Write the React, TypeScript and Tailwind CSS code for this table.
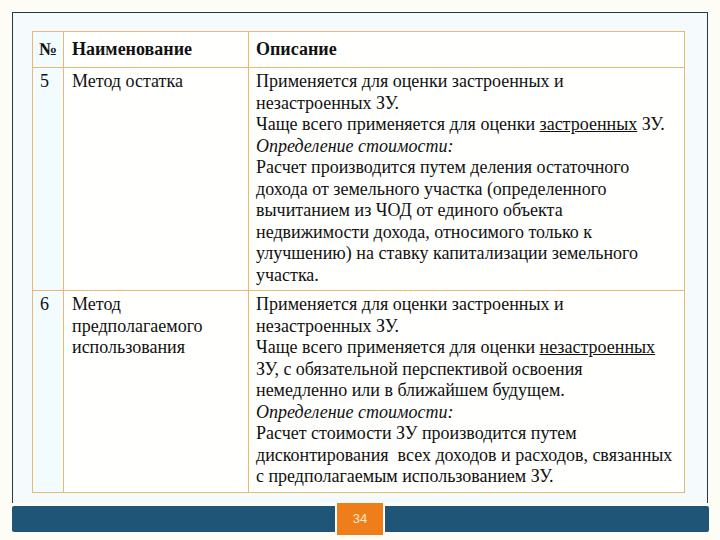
import React from 'react';

const cell = 'border border-[#e9b872] align-top pt-[3px]';

function Row({ num, name, children, height }: { num: string; name: React.ReactNode; children: React.ReactNode; height: string }) {
  return (
    <tr className={height}>
      <td className={`${cell} bg-[#f2fbfd] px-[7px]`}>{num}</td>
      <td className={`${cell} bg-[#fffffd] px-[8px]`}>{name}</td>
      <td className={`${cell} bg-[#fffffd] px-[7px] whitespace-nowrap`}>{children}</td>
    </tr>
  );
}

export default function App() {
  return (
    <div className="w-[720px] h-[540px] bg-[#fdfdf5] pt-[12px] px-[12px] font-['Liberation_Serif','Times_New_Roman',serif]">
      <div className="w-[696px] h-[491px] border border-[#24384a] border-b-0 bg-[#f5fbfc] pt-[18px] pl-[19px]">
        <table className="table-fixed border-collapse text-[18px] leading-[21.5px] text-[#111] w-[652px]">
          <colgroup>
            <col className="w-[31px]" />
            <col className="w-[185px]" />
            <col className="w-[436px]" />
          </colgroup>
          <tbody>
            <tr className="h-[36px]">
              <td className="border border-[#e9b872] bg-[#f2fbfd] px-[6px] font-bold">№</td>
              <td className="border border-[#e9b872] bg-[#fffffd] px-[8px] font-bold">Наименование</td>
              <td className="border border-[#e9b872] bg-[#fffffd] px-[7px] font-bold">Описание</td>
            </tr>
            <Row num="5" name="Метод остатка" height="h-[223px]">
              Применяется для оценки застроенных и<br />
              незастроенных ЗУ.<br />
              Чаще всего применяется для оценки <span className="underline">застроенных</span> ЗУ.<br />
              <i>Определение стоимости:</i><br />
              Расчет производится путем деления остаточного<br />
              дохода от земельного участка (определенного<br />
              вычитанием из ЧОД от единого объекта<br />
              недвижимости дохода, относимого только к<br />
              улучшению) на ставку капитализации земельного<br />
              участка.
            </Row>
            <Row
              num="6"
              name={
                <>
                  Метод<br />предполагаемого<br />использования
                </>
              }
              height="h-[202px]"
            >
              Применяется для оценки застроенных и<br />
              незастроенных ЗУ.<br />
              Чаще всего применяется для оценки <span className="underline">незастроенных</span><br />
              ЗУ, с обязательной перспективой освоения<br />
              немедленно или в ближайшем будущем.<br />
              <i>Определение стоимости:</i><br />
              Расчет стоимости ЗУ производится путем<br />
              дисконтирования&nbsp; всех доходов и расходов, связанных<br />
              с предполагаемым использованием ЗУ.
            </Row>
          </tbody>
        </table>
      </div>
      <div className="flex items-center w-[697px]">
        <div className="h-[26px] w-[323px] bg-[#1f5577] rounded-l-[2px]" />
        <div className="h-[32px] w-[46px] mx-[2px] bg-[#ef7d1a] flex items-center justify-center text-[13px] text-[#fde9c8] font-['Liberation_Sans',Arial,sans-serif]">
          34
        </div>
        <div className="h-[26px] flex-1 bg-[#1f5577] rounded-r-[2px]" />
      </div>
    </div>
  );
}
